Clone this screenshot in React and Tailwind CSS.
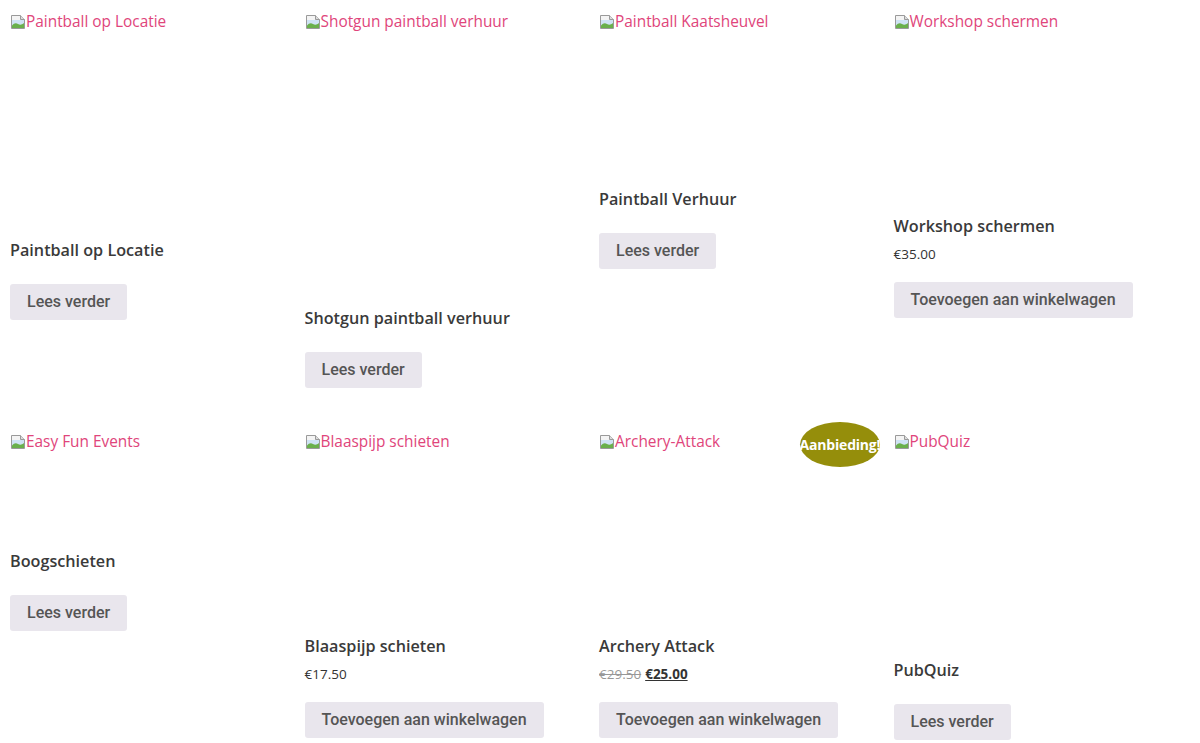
import React from "react";

// broken image placeholder icon, like the browser draws it
const BrokenImg = () => (
  <svg width="16" height="16" viewBox="0 0 16 16" className="inline-block shrink-0 align-[-3px]">
    <path d="M1.5 1.5h9l4 4v9h-13z" fill="#f4f4f4" stroke="#9a9a9a" />
    <path d="M10.5 1.5v4h4" fill="#dcdcdc" stroke="#9a9a9a" />
    <rect x="2" y="6" width="12" height="5" fill="#cfe3f5" />
    <path d="M2 14V11.5c2-2.5 4-3 6-1.5 2 1.2 4 0.8 6-1V14z" fill="#6ab04c" />
  </svg>
);

const products = [
  { alt: "Paintball op Locatie", title: "Paintball op Locatie", img: 220, btn: "Lees verder" },
  { alt: "Shotgun paintball verhuur", title: "Shotgun paintball verhuur", img: 288, btn: "Lees verder" },
  { alt: "Paintball Kaatsheuvel", title: "Paintball Verhuur", img: 169, btn: "Lees verder" },
  { alt: "Workshop schermen", title: "Workshop schermen", img: 196, price: "€35.00", btn: "Toevoegen aan winkelwagen" },
  { alt: "Easy Fun Events", title: "Boogschieten", img: 111, btn: "Lees verder" },
  { alt: "Blaaspijp schieten", title: "Blaaspijp schieten", img: 196, price: "€17.50", btn: "Toevoegen aan winkelwagen" },
  { alt: "Archery-Attack", title: "Archery Attack", img: 196, oldPrice: "€29.50", price: "€25.00", sale: true, btn: "Toevoegen aan winkelwagen" },
  { alt: "PubQuiz", title: "PubQuiz", img: 220, btn: "Lees verder" },
];

const Product = ({ p }) => (
  <li className="relative list-none">
    {p.sale && (
      <span className="absolute -top-2 right-0 flex h-[45px] w-[80px] items-center justify-center rounded-[50%] bg-[#958e0b] text-[14px] font-bold text-white font-['Open_Sans',sans-serif] leading-none tracking-[-0.2px] whitespace-nowrap">
        Aanbieding!
      </span>
    )}
    <a className="block">
      <div style={{ height: p.img }} className="pt-[4px]">
        <span className="flex items-start text-[15.4px] leading-[16px] text-[#e0457b] font-['Open_Sans',sans-serif]">
          <BrokenImg />
          {p.alt}
        </span>
      </div>
      <h2 className="py-2 text-[16.2px] leading-6 font-semibold text-[#3a3a3a] font-['Open_Sans',sans-serif]">
        {p.title}
      </h2>
      {p.price && (
        <div className="mb-1.5 text-[13.5px] leading-4 text-[#333] font-['Open_Sans',sans-serif]">
          {p.oldPrice && (
            <del className="mr-1 text-[#333] opacity-50">{p.oldPrice}</del>
          )}
          {p.sale ? (
            <ins className="font-bold underline">{p.price}</ins>
          ) : (
            p.price
          )}
        </div>
      )}
    </a>
    <button className="mt-3.5 rounded-[3px] bg-[#e9e6ed] px-[17px] py-2 text-[16px] leading-5 font-medium text-[#555] font-['Roboto',sans-serif]">
      {p.btn}
    </button>
  </li>
);

export default function App() {
  return (
    <div className="min-h-screen bg-white p-[10px]">
      <ul className="grid grid-cols-[repeat(4,281px)] gap-x-[13.5px] gap-y-[42px] items-start">
        {products.map((p) => (
          <Product key={p.alt} p={p} />
        ))}
      </ul>
    </div>
  );
}
